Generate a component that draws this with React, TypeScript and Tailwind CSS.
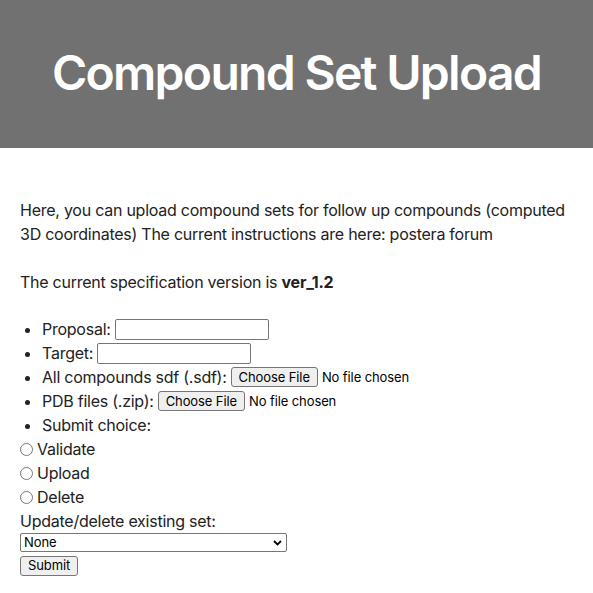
import React from "react";

const btn =
  "h-[20px] px-[7px] rounded-[3px] border border-[#767676] bg-[#efefef] text-[13px] leading-none tracking-[-0.1px] text-black [font-family:Inter,'Liberation_Sans',sans-serif]";

function Radio({ label }: { label: string }) {
  return (
    <label className="flex items-center h-[24px]">
      <span className="w-[13px] h-[13px] rounded-full border border-[#767676] bg-white mr-[4px]" />
      <span>{label}</span>
    </label>
  );
}

export default function App() {
  return (
    <div className="min-h-[593px] bg-white text-[#222] [font-family:Inter,'Liberation_Sans',sans-serif] text-[16px] leading-[24px] tracking-[-0.25px]">
      <header className="h-[148px] bg-[#717171] flex items-center justify-center">
        <h1 className="text-white text-[48px] font-semibold leading-none tracking-[-1.7px] pb-[2px]">
          Compound Set Upload
        </h1>
      </header>
      <main className="px-[20px] pt-[50px]">
        <p>
          Here, you can upload compound sets for follow up compounds (computed 3D coordinates) The
          current instructions are here: postera forum
        </p>
        <p className="mt-[24px]">
          The current specification version is <b className="font-bold">ver_1.2</b>
        </p>
        <ul className="mt-[23px] list-disc pl-[22px]">
          <li className="h-[24px]">
            <div className="flex items-center h-full">
              <span>Proposal:</span>
              <span className="ml-[4px] w-[154px] h-[21px] border border-[#767676] rounded-[2px] bg-white" />
            </div>
          </li>
          <li className="h-[24px]">
            <div className="flex items-center h-full">
              <span>Target:</span>
              <span className="ml-[4px] w-[154px] h-[21px] border border-[#767676] rounded-[2px] bg-white" />
            </div>
          </li>
          <li className="h-[24px]">
            <div className="flex items-center h-full">
              <span>All compounds sdf (.sdf):</span>
              <span className={btn + " ml-[4px] flex items-center"}>Choose File</span>
              <span className="ml-[4px] text-[13px] tracking-[-0.1px] text-black">No file chosen</span>
            </div>
          </li>
          <li className="h-[24px]">
            <div className="flex items-center h-full">
              <span>PDB files (.zip):</span>
              <span className={btn + " ml-[4px] flex items-center"}>Choose File</span>
              <span className="ml-[4px] text-[13px] tracking-[-0.1px] text-black">No file chosen</span>
            </div>
          </li>
          <li className="h-[24px]">Submit choice:</li>
        </ul>
        <div>
          <Radio label="Validate" />
          <Radio label="Upload" />
          <Radio label="Delete" />
        </div>
        <div className="h-[24px]">Update/delete existing set:</div>
        <div className="w-[267px] h-[19px] border border-[#767676] rounded-[2px] bg-white flex items-center justify-between pl-[3px] pr-[4px] text-[13px] leading-none tracking-[-0.1px] text-black">
          <span>None</span>
          <svg width="9" height="6" viewBox="0 0 9 6">
            <path d="M1 1 L4.5 4.5 L8 1" fill="none" stroke="black" strokeWidth="1.8" />
          </svg>
        </div>
        <button className={btn + " mt-[1px] px-[6px]"}>Submit</button>
      </main>
    </div>
  );
}
